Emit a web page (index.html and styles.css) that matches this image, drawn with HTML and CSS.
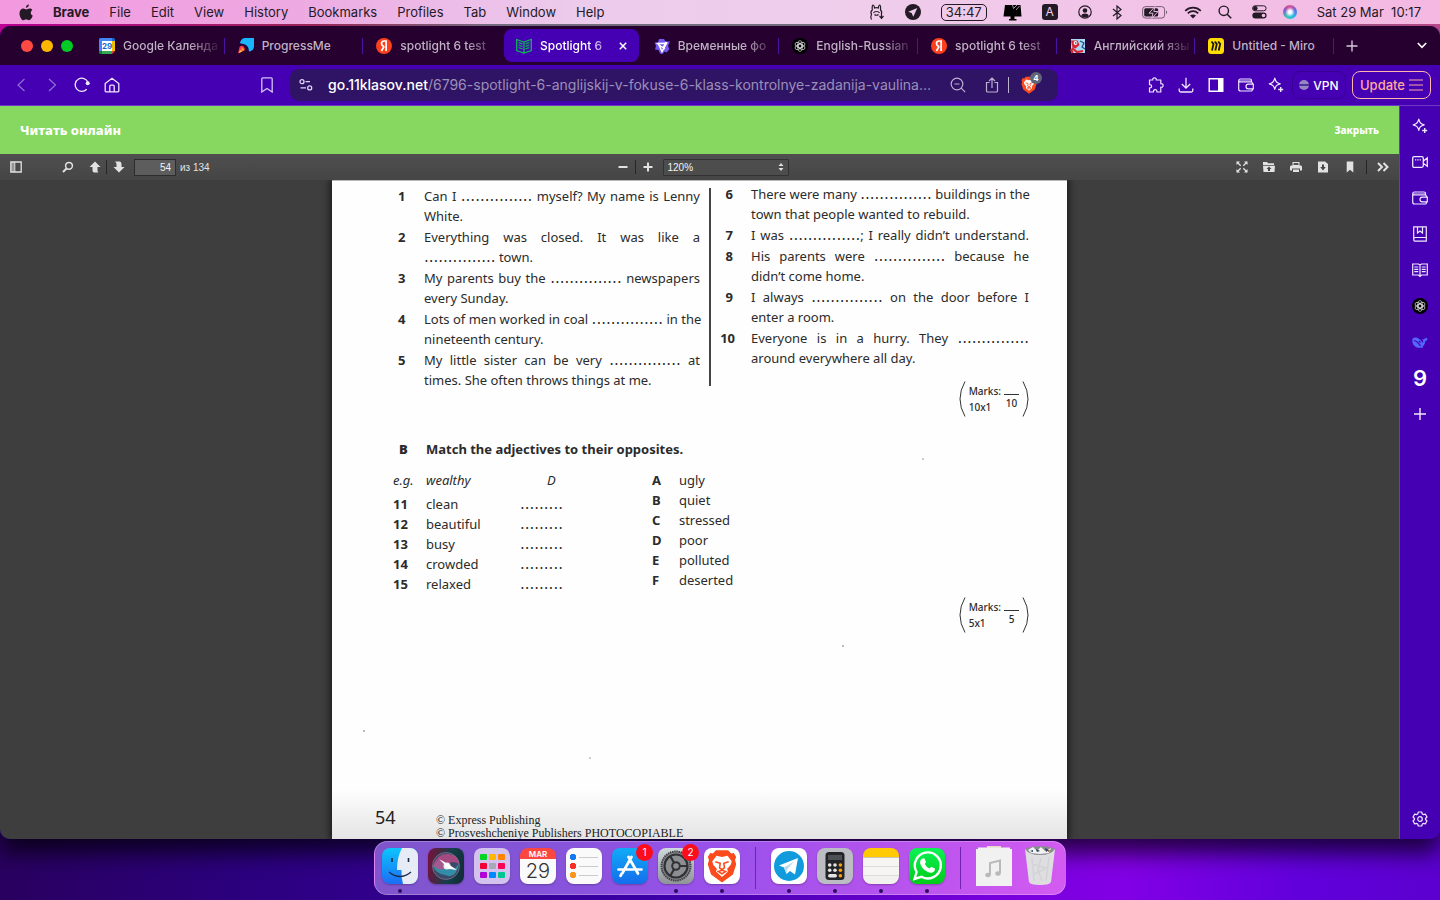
FILE: index.html
```html
<!DOCTYPE html>
<html lang="en">
<head>
<meta charset="utf-8">
<title>Spotlight 6</title>
<link rel="stylesheet" href="styles.css">
</head>
<body>
<svg class="defs" aria-hidden="true">
  <symbol id="sparkle" viewBox="0 0 16 16"><path d="M6.800 1.200c.9 3.600 1.800 4.600 5.400 5.600-3.600 1-4.500 2-5.400 5.600-1-3.600-2-4.600-5.600-5.600 3.600-1 4.600-2 5.600-5.600z" fill="none" stroke="currentColor" stroke-width="1.200" stroke-linejoin="round"/><path d="M12.700 10v5M10.200 12.500h5" stroke="currentColor" stroke-width="1.400"/></symbol>
  <symbol id="wallet" viewBox="0 0 16 16"><path d="M13.500 5V3.500a1.500 1.500 0 0 0-1.500-1.500H2.500a1.800 1.800 0 0 0-1.800 1.500V12A2 2 0 0 0 2.700 14H13a1.500 1.500 0 0 0 1.500-1.500M.7 3.800C1 4.800 2 5 2.700 5H13a1.500 1.500 0 0 1 1.500 1.500V7M15.300 7.200h-5a2.300 2.300 0 0 0 0 4.600h5z" fill="none" stroke="currentColor" stroke-width="1.200"/><path d="M1 3.200h12.300v1.600H2z" fill="currentColor" opacity=".6"/></symbol>
  <symbol id="yandex" viewBox="0 0 16 16"><circle cx="8" cy="8" r="8" fill="#fc3f1d"/><path d="M10.100 13V3H8.300C6.500 3 5.500 4 5.500 5.600c0 1.500.8 2.300 2.400 2.900M8.200 8.300 5.400 13" fill="none" stroke="#fff" stroke-width="1.700"/></symbol>
  <symbol id="knot" viewBox="0 0 16 16"><circle cx="8" cy="8" r="8" fill="#000"/><g fill="none" stroke="#d8d8d8" stroke-width=".7"><ellipse cx="8" cy="6.500" rx="2.300" ry="4"/><ellipse cx="8" cy="6.500" rx="2.300" ry="4" transform="rotate(60 8 8)"/><ellipse cx="8" cy="6.500" rx="2.300" ry="4" transform="rotate(120 8 8)"/><ellipse cx="8" cy="6.500" rx="2.300" ry="4" transform="rotate(180 8 8)"/><ellipse cx="8" cy="6.500" rx="2.300" ry="4" transform="rotate(240 8 8)"/><ellipse cx="8" cy="6.500" rx="2.300" ry="4" transform="rotate(300 8 8)"/></g></symbol>
  <symbol id="lion" viewBox="0 0 24 28"><path d="M7 1h10l2.500 2.700 2.200-.4 2 3.200-1 2.500 1 3.500-2.700 8.500L12 27.500 3 21 .3 12.500l1-3.500-1-2.500 2-3.200 2.200.4z" fill="#fb4b1d"/><path d="M7.500 5.500 12 6.500l4.500-1 3.500 4.500-.8 3-3 3.500.8 2L12 23l-5-4.500.8-2-3-3.500L4 10z" fill="#fff"/><path d="M6.500 10.500l4 1.200-.5 3.800 2 1.500 2-1.500-.5-3.800 4-1.200M9 18.500l3-1 3 1-3 2z" fill="none" stroke="#fb4b1d" stroke-width="1.300"/></symbol>
</svg>

<header class="menubar">
  <nav class="menus">
    <svg class="apple" viewBox="0 0 14 17"><path d="M9.900.5c.1 1.700-1.300 3.300-3 3.300C6.700 2.200 8.200.7 9.900.5zM13.300 5.900c-2.300 1.500-1.900 4.700.5 5.700-.7 2.300-2.300 4.700-3.800 4.700-1.100 0-1.500-.7-2.800-.7s-1.800.7-2.800.7C2.600 16.300.5 12.600.5 9.500c0-3 1.900-4.900 3.900-4.900 1.200 0 2.100.8 2.900.8s1.900-.9 3.300-.9c1.100 0 2.100.5 2.700 1.400z" fill="currentColor"/></svg>
    <b>Brave</b><span>File</span><span>Edit</span><span>View</span><span>History</span><span>Bookmarks</span><span>Profiles</span><span>Tab</span><span>Window</span><span>Help</span>
  </nav>
  <div class="status">
    <svg width="16" height="18" viewBox="0 0 16 18"><path d="M2.500 16.500c-1-2-.8-3.700 0-5-.9-1.800-.6-3.500.8-4.500C3 4.500 3.200 2 4 2s1.300 1.500 1.500 3c1.200-.6 2.600-.6 3.800 0C9.500 3.500 10 2 10.700 2s1.100 2.500.8 5c1.200 1 1.500 2.500.8 4M4.500 10c1-2 5-2 6 0M5.500 11.500c1 1 3 1 4 0M12.500 10v4.500m-2-1.500 2 2.300 2-2.300" fill="none" stroke="currentColor" stroke-width="1.200"/></svg>
    <svg class="s-tg" width="16" height="16" viewBox="0 0 16 16"><circle cx="8" cy="8" r="8" fill="currentColor"/><path d="M12.300 4 3.300 7.700l3.300 1.400 1.700 3.600z" fill="#efcbeb"/></svg>
    <span class="timer">34:47</span>
    <svg class="s-mon" width="19" height="17" viewBox="0 0 19 17"><path d="M2 1h15.500l1 11.500H.5zM7.500 12h4v3h2v1.500H6V15h1.500z" fill="#000"/><path d="M10.500 4.500 14 1M13 6l3.500-4M10.500 4.500 9.500 1" stroke="#efcbeb" stroke-width=".7"/></svg>
    <span class="kbd">A</span>
    <svg class="s-user" width="14" height="14" viewBox="0 0 14 14"><circle cx="7" cy="7" r="6.200" fill="none" stroke="currentColor" stroke-width="1.200"/><circle cx="7" cy="5.500" r="2.300" fill="currentColor"/><path d="M3.200 11c.8-3.200 6.800-3.200 7.600 0-2 2-5.600 2-7.600 0z" fill="currentColor"/></svg>
    <svg class="s-bt" width="10" height="15" viewBox="0 0 10 15"><path d="M1 4l8 6.500L5 14V1l4 3.500L1 11" fill="none" stroke="currentColor" stroke-width="1.200"/></svg>
    <svg class="s-bat" width="26" height="13" viewBox="0 0 26 13"><rect x=".6" y=".6" width="22" height="11.500" rx="3" fill="none" stroke="currentColor" opacity=".6"/><rect x="2.200" y="2.200" width="14" height="8.300" rx="1.500" fill="currentColor"/><path d="M24 4.500c1.500.5 1.500 3 0 3.500z" fill="currentColor" opacity=".6"/><path d="M13 .5 7 7.200h4L9.800 12.300 16 5.500h-4.200z" fill="currentColor" stroke="#f1c5e8" stroke-width=".9"/></svg>
    <svg class="s-wifi" width="18" height="13" viewBox="0 0 18 13"><path d="M1.200 4.800c4.500-4.300 11.100-4.300 15.600 0M3.800 7.300c3-2.800 7.400-2.800 10.400 0" fill="none" stroke="currentColor" stroke-width="1.800"/><path d="M6 9.600c1.700-1.600 4.300-1.600 6 0l-3 3z" fill="currentColor"/></svg>
    <svg class="s-find" width="14" height="14" viewBox="0 0 14 14"><circle cx="5.800" cy="5.800" r="4.700" fill="none" stroke="currentColor" stroke-width="1.400"/><path d="m9.200 9.200 4 4" stroke="currentColor" stroke-width="1.600"/></svg>
    <svg class="s-ctl" width="15" height="14" viewBox="0 0 15 14"><rect x=".6" y=".8" width="13.500" height="5" rx="2.500" fill="none" stroke="currentColor"/><circle cx="3.300" cy="3.300" r="2.200" fill="currentColor"/><rect x=".3" y="7.500" width="14.300" height="6" rx="3" fill="currentColor"/><circle cx="11.500" cy="10.500" r="1.800" fill="#f3bfe6"/></svg>
    <i class="siri-dot"></i>
    <time>Sat 29 Mar&nbsp; 10:17</time>
  </div>
</header>

<section class="window">
  <div class="tabstrip">
    <div class="lights"><button class="red" aria-label="Close"></button><button class="yellow" aria-label="Minimize"></button><button class="green" aria-label="Zoom"></button></div>
    <div class="tabs" role="tablist">
      <div class="tab fade" role="tab"><svg viewBox="0 0 16 16"><path d="M0 1.500Q0 0 1.500 0H13v3H3v10H0z" fill="#4285f4"/><path d="M13 0h1.500Q16 0 16 1.500V3h-3z" fill="#1967d2"/><path d="M13 3h3v10h-3z" fill="#fbbc04"/><path d="M3 13h10v3H3z" fill="#34a853"/><path d="M0 13h3v3H1.500Q0 16 0 14.500z" fill="#188038"/><path d="M13 13h3l-3 3z" fill="#ea4335"/><path d="M3 3h10v10H3z" fill="#fff"/><text x="8" y="11" text-anchor="middle" class="cal-mini">29</text></svg><span>Google Календа</span></div>
      <div class="tab" role="tab"><svg viewBox="0 0 16 16"><path d="M3 2.500Q4 0 6.500 0H16v8.500Q15.500 13 11 13.500 11 6 3 5.500 1 5 3 2.500z" fill="#19b5fe"/><path d="M0 15.500 1.500 9q2-2 4-.5t1 4Z" fill="#fb3a4a"/><path d="M1 15 2 12l2 1.500z" fill="#ffd43b"/><path d="m3.500 9 3 3-3 1z" fill="#ff9d2f"/></svg><span>ProgressMe</span></div>
      <div class="tab fade" role="tab"><svg><use href="#yandex"/></svg><span>spotlight 6 test</span></div>
      <div class="tab active" role="tab" aria-selected="true"><svg viewBox="0 0 16 16"><path d="M.7 1.500 8 4l7.300-2.500v11L8 15 .7 12.500zM8 4v11M2.500 4.500l4 1.400M2.500 7l4 1.400M2.500 9.500l4 1.400M13.500 4.500l-4 1.400M13.500 7l-4 1.400M13.500 9.500l-4 1.400" fill="none" stroke="#0fb158" stroke-width="1.300"/></svg><span>Spotlight 6</span><button class="close" aria-label="Close tab"><svg viewBox="0 0 8 8"><path d="m.8.8 6.400 6.400m0-6.400L.8 7.200" stroke="currentColor" stroke-width="1.500"/></svg></button></div>
      <div class="tab fade" role="tab"><svg viewBox="0 0 16 16"><path d="M5 1h5l1.500 2.500H16L14 8l1.500 3-3 3.500-2-1L8.500 16 6 15.500 4.500 12 1 11.500 2 8 .5 4.500H4z" fill="#7358f5"/><path d="m2.500 5.500 10-.2L8 13.500 5 7l6 4M12.500 4 9 10" fill="none" stroke="#fff" stroke-width="1.500"/></svg><span>Временные фо</span></div>
      <div class="tab fade" role="tab"><svg><use href="#knot"/></svg><span>English-Russian</span></div>
      <div class="tab fade" role="tab"><svg><use href="#yandex"/></svg><span>spotlight 6 test</span></div>
      <div class="tab fade" role="tab"><svg viewBox="0 0 16 16"><path d="M1 1h14v14H1z" fill="#a9d8f3"/><path d="M1 2.500h6.500l2 4.500-4 3.500-3-1z" fill="#d92332"/><circle cx="5.500" cy="5" r="1.900" fill="#fff"/><circle cx="5.800" cy="5" r=".8" fill="#222"/><path d="m1 11 1.500 4M2 10l5 4 6-1" fill="none" stroke="#d92332" stroke-width="2.200"/><path d="m10 3 4 2-2 4 3 2" fill="none" stroke="#23518f" stroke-width="1.300"/></svg><span>Английский язы</span></div>
      <div class="tab" role="tab"><svg viewBox="0 0 16 16"><rect width="16" height="16" rx="3.500" fill="#ffdd00"/><path d="M3.500 3.500 5.500 6 4 12.500M6.800 3.500 8.800 6l-1.500 6.500M10.200 3.500 12.200 6l-1.500 6.500" fill="none" stroke="#181818" stroke-width="1.800"/></svg><span>Untitled - Miro</span></div>
    </div>
    <button class="newtab" aria-label="New tab"><svg width="12" height="12" viewBox="0 0 12 12"><path d="M6 .5v11M.5 6h11" stroke="#d5c8da" stroke-width="1.400"/></svg></button>
    <button class="tabmenu" aria-label="Search tabs"><svg width="10" height="7" viewBox="0 0 10 7"><path d="m.8 1 4.200 4.300L9.200 1" fill="none" stroke="#fff" stroke-width="1.600"/></svg></button>
  </div>

  <div class="toolbar">
    <div class="navs">
      <button class="dim" aria-label="Back"><svg viewBox="0 0 16 16"><path d="M10.500 2 4 8l6.500 6" fill="none" stroke="currentColor" stroke-width="1.200"/></svg></button>
      <button class="dim" aria-label="Forward"><svg viewBox="0 0 16 16"><path d="M5 2l6.500 6L5 14" fill="none" stroke="currentColor" stroke-width="1.200"/></svg></button>
      <button aria-label="Reload"><svg viewBox="0 0 16 16"><path d="M12.700 12.200A6.600 6.600 0 1 1 14 5.500" fill="none" stroke="currentColor" stroke-width="1.300"/><circle cx="13.700" cy="6.300" r="2" fill="currentColor"/></svg></button>
      <button aria-label="Home"><svg viewBox="0 0 16 16"><path d="M1.200 6.500 8 1.200l6.800 5.300V14a.8.800 0 0 1-.8.800H2a.8.800 0 0 1-.8-.8zM5.800 14.500V9.200a1 1 0 0 1 1-1h2.400a1 1 0 0 1 1 1v5.300" fill="none" stroke="currentColor" stroke-width="1.300"/></svg></button>
      <button class="mark" aria-label="Bookmark"><svg viewBox="0 0 16 16"><path d="M2.800 1.800a1 1 0 0 1 1-1h8.400a1 1 0 0 1 1 1V15L8 11.500 2.800 15z" fill="none" stroke="currentColor" stroke-width="1.300"/></svg></button>
    </div>
    <div class="omnibox">
      <svg width="14" height="14" viewBox="0 0 14 14"><g fill="none" stroke="#ddd5f5" stroke-width="1.300"><circle cx="3" cy="3.700" r="2"/><path d="M6.500 3.700H11M1.500 9.800H7"/><circle cx="10.700" cy="9.900" r="2"/></g></svg>
      <p class="url"><b>go.11klasov.net</b>/6796-spotlight-6-anglijskij-v-fokuse-6-klass-kontrolnye-zadanija-vaulina...</p>
      <button aria-label="Zoom"><svg viewBox="0 0 16 16"><circle cx="7" cy="7" r="5.800" fill="none" stroke="currentColor" stroke-width="1.200"/><path d="m11.200 11.200 4 4M4.500 7h5" stroke="currentColor" stroke-width="1.200"/></svg></button>
      <button aria-label="Share"><svg viewBox="0 0 16 16"><path d="M5.500 5.500h-3v8.500q0 1 1 1h9q1 0 1-1V5.500h-3M8 11V1.500M5 4l3-3 3 3" fill="none" stroke="currentColor" stroke-width="1.200"/></svg></button>
      <i class="bar"></i>
      <button class="shield" aria-label="Shields"><svg><use href="#lion"/></svg><em>4</em></button>
    </div>
    <div class="tools">
      <button aria-label="Extensions"><svg viewBox="0 0 16 16"><path d="M1.500 3h3.300C4.500 1.500 5.300.8 6.500.8S8.500 1.500 8.200 3h4.600v3.800c1.500-.3 2.300.5 2.300 1.700s-.8 2-2.300 1.700V15H8.900c.2-1.600-.5-2.300-1.700-2.300s-2 .7-1.700 2.300h-4v-4.200c1.400.2 2.100-.5 2.100-1.600S2.900 7.400 1.500 7.600z" fill="none" stroke="currentColor" stroke-width="1.200" stroke-linejoin="round"/></svg></button>
      <button aria-label="Downloads"><svg viewBox="0 0 16 16"><path d="M8 .8v10M3.800 7 8 11l4.200-4M1.200 11.500V13.500a1.500 1.500 0 0 0 1.500 1.500h10.600a1.500 1.500 0 0 0 1.500-1.500v-2" fill="none" stroke="currentColor" stroke-width="1.300"/></svg></button>
      <button aria-label="Sidebar"><svg viewBox="0 0 16 16"><path d="M1.200 1.700h13.600v12.600H1.200z" fill="none" stroke="#fff" stroke-width="1.400"/><path d="M10 1.500h5v13h-5z" fill="#fff"/></svg></button>
      <button aria-label="Wallet"><svg><use href="#wallet"/></svg></button>
      <button aria-label="Leo"><svg><use href="#sparkle"/></svg></button>
    </div>
    <button class="vpn"><i></i>VPN</button>
    <button class="update">Update<svg width="14" height="12" viewBox="0 0 14 12"><path d="M0 1h14M0 6h14M0 11h14" stroke="currentColor" stroke-width="1.200"/></svg></button>
  </div>

  <div class="content">
    <main class="reader">
      <div class="greenbar"><h1>Читать онлайн</h1><a href="#">Закрыть</a></div>
      <div class="pdfbar">
        <div class="side">
          <button aria-label="Toggle sidebar"><svg viewBox="0 0 12 12"><path d="M.8 1h10.400v10H.8z" fill="none" stroke="currentColor" stroke-width="1.300"/><path d="M1 1h3.500v10H1z" fill="currentColor" opacity=".5"/><path d="M4.800 1v10" stroke="currentColor"/></svg></button>
          <button class="find" aria-label="Find"><svg viewBox="0 0 12 12"><circle cx="7" cy="4.800" r="3.400" fill="none" stroke="currentColor" stroke-width="1.500"/><path d="M4.500 7.500 1 11" stroke="currentColor" stroke-width="2"/></svg></button>
          <button class="up" aria-label="Previous page"><svg viewBox="0 0 12 12"><path d="m6 .5 5.500 5.500H8.500v3.500q0 1.500 1 2H5q-1.500-.5-1.500-2V6h-3z" fill="currentColor"/></svg></button>
          <i class="split"></i>
          <button class="down" aria-label="Next page"><svg viewBox="0 0 12 12"><path d="M6 11.500.5 6h3V3q0-1.500-1.500-2.500h5Q8.500 1 8.500 3v3h3z" fill="currentColor"/></svg></button>
          <label class="pageno"><input type="text" value="54" aria-label="Page"> из 134</label>
        </div>
        <div class="mid">
          <button aria-label="Zoom out"><svg viewBox="0 0 12 12"><path d="M1.500 6h9" stroke="currentColor" stroke-width="2"/></svg></button>
          <i class="split"></i>
          <button aria-label="Zoom in"><svg viewBox="0 0 12 12"><path d="M1.500 6h9M6 1.500v9" stroke="currentColor" stroke-width="2"/></svg></button>
          <div class="scale"><select aria-label="Scale"><option>120%</option></select><svg width="6" height="8" viewBox="0 0 6 8"><path d="M3 0l2.500 3h-5zM3 8 .5 5h5z" fill="#e0e0e0"/></svg></div>
        </div>
        <div class="end">
          <button aria-label="Full screen"><svg viewBox="0 0 12 12"><path d="M.5.500H4L.5 4zM11.500.500V4L8 .500zM.5 11.500V8L4 11.500zM11.500 11.500H8L11.500 8z" fill="currentColor"/><path d="m1 1 3.700 3.700M11 1 7.300 4.700M1 11l3.700-3.700M11 11 7.300 7.300" stroke="currentColor" stroke-width="1.300"/></svg></button>
          <button aria-label="Open"><svg viewBox="0 0 12 12"><path d="M0 1h4l1 1.300h6V4H0zM0 4.800h12L11.500 11H.5z" fill="currentColor"/><path d="M6 5.500 8.500 8H7v2H5V8H3.500z" fill="#444"/></svg></button>
          <button aria-label="Print"><svg viewBox="0 0 12 12"><path d="M2.500 1h7v3.500h-7zM0 6q0-1.500 1-1.500h10q1 0 1 1.500v3.500h-2V7.500H2v2H0zM3 8.500h6V11H3z" fill="currentColor"/><path d="M3.500 2h5v2h-5z" fill="#555"/></svg></button>
          <button aria-label="Download"><svg viewBox="0 0 12 12"><path d="M1 .5h7l3 2.500v8.500H1z" fill="currentColor"/><path d="M5 3.500h2V6h1.800L6 9.500 3.200 6H5z" fill="#444"/></svg></button>
          <button aria-label="Current view"><svg viewBox="0 0 12 12"><path d="M2.700.500h6.600v11L6 8.800l-3.300 2.700z" fill="currentColor"/></svg></button>
          <i class="split"></i>
          <button aria-label="Tools"><svg viewBox="0 0 12 12"><path d="m1 2 4 4-4 4M6.500 2l4 4-4 4" fill="none" stroke="currentColor" stroke-width="2"/></svg></button>
        </div>
      </div>

      <div class="viewer">
        <article class="sheet">
          <section class="gaps">
            <ol class="left">
              <li><b>1</b><p><span class="full">Can I <s>...............</s> myself? My name is Lenny</span><span>White.</span></p></li>
              <li><b>2</b><p><span class="full">Everything was closed. It was like a</span><span><s>...............</s> town.</span></p></li>
              <li><b>3</b><p><span class="full">My parents buy the <s>...............</s> newspapers</span><span>every Sunday.</span></p></li>
              <li><b>4</b><p><span class="full">Lots of men worked in coal <s>...............</s> in the</span><span>nineteenth century.</span></p></li>
              <li><b>5</b><p><span class="full">My little sister can be very <s>...............</s> at</span><span>times. She often throws things at me.</span></p></li>
            </ol>
            <ol class="right" start="6">
              <li><b>6</b><p><span class="full">There were many <s>...............</s> buildings in the</span><span>town that people wanted to rebuild.</span></p></li>
              <li><b>7</b><p><span class="full">I was <s>...............</s>; I really didn’t understand.</span></p></li>
              <li><b>8</b><p><span class="full">His parents were <s>...............</s> because he</span><span>didn’t come home.</span></p></li>
              <li><b>9</b><p><span class="full">I always <s>...............</s> on the door before I</span><span>enter a room.</span></p></li>
              <li><b>10</b><p><span class="full">Everyone is in a hurry. They <s>...............</s></span><span>around everywhere all day.</span></p></li>
            </ol>
          </section>
          <div class="marks"><svg viewBox="0 0 7 36"><path d="M6 .5Q-4 18 6 35.500" fill="none" stroke="#333"/></svg><p>Marks:<br>10x1</p><p class="total">10</p><svg viewBox="0 0 7 36"><path d="M1 .5Q11 18 1 35.500" fill="none" stroke="#333"/></svg></div>
          <h2><b>B</b>Match the adjectives to their opposites.</h2>
          <section class="match">
            <table class="words">
              <tr class="eg"><td>e.g.</td><td>wealthy</td><td>D</td></tr>
              <tr><th>11</th><td>clean</td><td><s>.........</s></td></tr>
              <tr><th>12</th><td>beautiful</td><td><s>.........</s></td></tr>
              <tr><th>13</th><td>busy</td><td><s>.........</s></td></tr>
              <tr><th>14</th><td>crowded</td><td><s>.........</s></td></tr>
              <tr><th>15</th><td>relaxed</td><td><s>.........</s></td></tr>
            </table>
            <table class="opposites">
              <tr><th>A</th><td>ugly</td></tr>
              <tr><th>B</th><td>quiet</td></tr>
              <tr><th>C</th><td>stressed</td></tr>
              <tr><th>D</th><td>poor</td></tr>
              <tr><th>E</th><td>polluted</td></tr>
              <tr><th>F</th><td>deserted</td></tr>
            </table>
          </section>
          <div class="marks second"><svg viewBox="0 0 7 36"><path d="M6 .5Q-4 18 6 35.500" fill="none" stroke="#333"/></svg><p>Marks:<br>5x1</p><p class="total">5</p><svg viewBox="0 0 7 36"><path d="M1 .5Q11 18 1 35.500" fill="none" stroke="#333"/></svg></div>
          <footer><span class="folio">54</span><p>© Express Publishing<br>© Prosveshcheniye Publishers PHOTOCOPIABLE</p></footer>
        </article>
      </div>
    </main>
    <aside class="sidebar">
      <button aria-label="Leo"><svg><use href="#sparkle"/></svg></button>
      <button aria-label="Talk"><svg viewBox="0 0 16 16"><path d="M.7 4.200q0-1.500 1.500-1.500h7.600q1.500 0 1.500 1.500v7.600q0 1.500-1.500 1.500H2.200q-1.500 0-1.500-1.500zM11.500 7l3.800-3.200v8.400L11.500 9.500" fill="none" stroke="currentColor" stroke-width="1.300"/><path d="M3 5.800h1.300m1 0h1.300m1 0h1.300" stroke="currentColor" stroke-width="1.300"/></svg></button>
      <button aria-label="Wallet"><svg><use href="#wallet"/></svg></button>
      <button aria-label="Bookmarks"><svg viewBox="0 0 16 16"><path d="M1.700.800h12.600v14.400H3.500q-1.800 0-1.800-1.800zM1.700 13.200q0-1.700 1.800-1.700h10.800M5.500 1v6L8 5l2.500 2V1" fill="none" stroke="currentColor" stroke-width="1.200"/></svg></button>
      <button aria-label="Reading list"><svg viewBox="0 0 16 16"><path d="M.7 2h5.800L8 3l1.500-1h5.800v11H9.500L8 14.500 6.500 13H.7zM8 3v11M2.300 5h4M2.300 7.300h4M2.300 9.700h4M9.700 5h4M9.700 7.300h4M9.700 9.700h4" fill="none" stroke="currentColor" stroke-width="1.200"/></svg></button>
      <button aria-label="ChatGPT"><svg><use href="#knot"/></svg></button>
      <button aria-label="DeepSeek"><svg viewBox="0 0 16 16"><path d="M.5 5c1.500-2 4-2 6-.5 2 1 3 3 4.500 4.500.5-1.500 0-3-1-4.300.8.700 1.500.8 2 .6.700-1 1.700-1.200 3.500-1.300-.2 2-1 3-2.300 3.300-.2 2.700-1.200 4.400-2.700 5.200l1 1c-3.500.7-7 .5-9-1.500S0 7.500.5 5z" fill="#5468ff"/><path d="M2 6.500c2.500.5 5 3 6.500 5.500M7 7l1.500 1.500" fill="none" stroke="#4400b2" stroke-width="1.200"/></svg></button>
      <button class="nine">9</button>
      <button aria-label="Add"><svg viewBox="0 0 16 16"><path d="M8 2v12M2 8h12" stroke="currentColor" stroke-width="1.400"/></svg></button>
      <button class="gear" aria-label="Settings"><svg viewBox="0 0 16 16"><path d="M6.300 1h3.400l.6 2 1 .6 2-.5L15 6l-1.500 1.500v1L15 10l-1.700 2.900-2-.5-1 .6-.6 2H6.300l-.6-2-1-.6-2 .5L1 10l1.500-1.500v-1L1 6l1.700-2.900 2 .5 1-.6z" fill="none" stroke="currentColor" stroke-width="1.200" stroke-linejoin="round"/><circle cx="8" cy="8" r="2.300" fill="none" stroke="currentColor" stroke-width="1.200"/></svg></button>
    </aside>
  </div>
</section>

<div class="dockrow">
  <nav class="dock">
    <span class="app run finder"><svg viewBox="0 0 36 36"><defs><linearGradient id="fb" x2="0" y2="1"><stop stop-color="#0dc5fb"/><stop offset="1" stop-color="#1c6df5"/></linearGradient></defs><rect width="36" height="36" rx="8" fill="url(#fb)"/><path d="M20 0h8a8 8 0 0 1 8 8v20a8 8 0 0 1-8 8h-7q-2-7-1.500-14H15Q15 9 20 0z" fill="#e6ebf5"/><path d="M7 24q11 9 22 0" fill="none" stroke="#1b2b48" stroke-width="1.300"/><path d="M10 10v4M26.500 10v4" stroke="#1b2b48" stroke-width="1.600"/></svg></span>
    <span class="app siri"><svg viewBox="0 0 36 36"><circle cx="18" cy="18" r="13.500" fill="#3a4a68" stroke="#a09bb0" stroke-width=".5"/><path d="M5 18q7-11 13-1T31 15q-3 17-14 12Q8 26 5 18z" fill="#2fa9c0" opacity=".7"/><path d="M5 18Q9 5 20 6t11 10q-8-5-12 2t-14 0z" fill="#c94a8a" opacity=".75"/><path d="m11 11 9 5 9 6-8-1z" fill="#fff"/><circle cx="19" cy="18" r="3.500" fill="#fff" opacity=".9"/></svg></span>
    <span class="app launch"><i></i><i></i><i></i><i></i><i></i><i></i><i></i><i></i><i></i></span>
    <span class="app calendar"><em>MAR</em><strong>29</strong></span>
    <span class="app reminders"><i></i><i></i><i></i></span>
    <span class="app store"><svg viewBox="0 0 36 36"><path d="m19.500 9-9 16M16.500 9 26 25.500M6.500 21.500h15M25 21.500h4.500M9.500 26l-1 1.800" fill="none" stroke="#fff" stroke-width="2.700" stroke-linecap="round"/></svg><sup>1</sup></span>
    <span class="app run prefs"><svg viewBox="0 0 36 36"><circle cx="18" cy="18" r="14.500" fill="#8c8e92" stroke="#3e4044" stroke-width="2" stroke-dasharray="1.500 .7"/><circle cx="18" cy="18" r="11.500" fill="none" stroke="#303236" stroke-width="2.200"/><circle cx="18" cy="18" r="3.800" fill="none" stroke="#303236" stroke-width="2"/><path d="M21.800 18H29M16 14.800 12.500 8.500M16 21.200 12.500 27.500" stroke="#303236" stroke-width="2.200"/></svg><sup>2</sup></span>
    <span class="app run brave"><svg viewBox="0 0 24 28"><use href="#lion" width="24" height="28"/></svg></span>
    <i class="rule"></i>
    <span class="app run telegram"><svg viewBox="0 0 36 36"><circle cx="18" cy="18" r="15" fill="#129bdc"/><path d="M27 10 8 17.500l5 2 2.500 6.500 3.500-3 5 3.500z" fill="#fff"/><path d="m13 19.500 10-6-7 8-.5 4.500" fill="#b9d9ec"/></svg></span>
    <span class="app run calc"><svg viewBox="0 0 36 36"><rect x="8.500" y="4" width="19" height="28" rx="3.500" fill="#232427"/><path d="M11 7h14v5H11z" fill="#4d5055"/><g fill="#e5e5e5"><circle cx="12.700" cy="17" r="1.800"/><circle cx="18" cy="17" r="1.800"/><circle cx="12.700" cy="22.300" r="1.800"/><circle cx="18" cy="22.300" r="1.800"/><rect x="11" y="26" width="9" height="3.600" rx="1.800"/></g><g fill="#ff9f0a"><circle cx="23.400" cy="17" r="1.800"/><circle cx="23.400" cy="22.300" r="1.800"/><circle cx="23.400" cy="27.700" r="1.800"/></g></svg></span>
    <span class="app run notes"></span>
    <span class="app run whatsapp"><svg viewBox="0 0 36 36"><path d="M5.500 31 7.600 24A13 13 0 1 1 12.500 28.800z" fill="none" stroke="#fff" stroke-width="2.400"/><path d="M13.500 10.500h2l1.500 3.700-1.300 1.800q1.500 3 4.800 4.500l1.800-1.800 3.700 1.800q.2 3.500-3.500 4.300c-5.500 0-11.500-6-11.500-11q.5-2.500 2.500-3.300z" fill="#fff"/></svg></span>
    <i class="rule"></i>
    <span class="app music"><svg viewBox="0 0 36 40"><path d="M11 0h14v4H11z" fill="#e5d9ca"/><path d="M0 3h2V1.500h32V3h2v37H0z" fill="#f1f1f2"/><path d="M14 29V17l10-2.500V27" fill="none" stroke="#b9b9bb" stroke-width="2"/><ellipse cx="12" cy="29" rx="2.700" ry="2.200" fill="#b9b9bb"/><ellipse cx="22" cy="27.500" rx="2.700" ry="2.200" fill="#b9b9bb"/></svg></span>
    <span class="app trash"><svg viewBox="0 0 32 40"><path d="M1 3h30l-4 33q-1 3-11 3T5 36z" fill="#dedee1"/><path d="M1 3q5-3 15-3t15 3q-4 6-15 6T1 3z" fill="#8b8d92"/><path d="m4 4 5-3 4 4 4-4 4 4 6-3-2 5-9 1-9-1z" fill="#f2f2f2"/><path d="m12 3 4 2-3 1zM21 2l4 2-3 2zM6 5l3-1v2z" fill="#263f61"/><path d="m24 4 3 1-3 1z" fill="#a5582e"/><path d="m8 12 2 23M17 12l-3 12 4 11M25 11l-3 24M8 18l14 4-12 6" fill="none" stroke="#d3d3d7" stroke-width="1.500"/></svg></span>
  </nav>
</div>
</body>
</html>
```

FILE: styles.css
```css
* { box-sizing: border-box; }
body {
  margin: 0;
  height: 100vh;
  overflow: hidden;
  display: flex;
  flex-direction: column;
  font-family: Inter, "Noto Sans", sans-serif;
  font-size: 13px;
  background: linear-gradient(90deg, #c4009c 0, #a3285c 22%, #7a7288 34%, #77717f 80%, #c04a90 100%) top / 100% 60px no-repeat,
    linear-gradient(90deg, #29005f 0, #2c0080 18%, #3b00a5 45%, #7600db 68%, #8200e5 78%, #6200dc 90%, #5b00cf 100%);
}
button { border: 0; padding: 0; background: none; color: inherit; font: inherit; display: flex; align-items: center; justify-content: center; }
p, h1, h2, ol { margin: 0; padding: 0; }
svg { display: block; flex: none; }
.defs { position: absolute; width: 0; height: 0; }

/* System menu bar */
.menubar {
  flex: none;
  position: relative;
  z-index: 1;
  height: 24px;
  margin-bottom: 2px;
  padding: 0 19px 0 19px;
  display: flex;
  align-items: center;
  justify-content: space-between;
  color: #241a26;
  background: linear-gradient(90deg, #f399df 0, #eda9e2 20%, #eccbec 40%, #efcdeb 60%, #f4b8e2 100%);
}
.menus { display: flex; align-items: center; gap: 20px; }
.menus b { font-weight: 700; }
.apple { width: 14px; height: 17px; }
.status { display: flex; align-items: center; gap: 16px; }
.timer { border: 1px solid #241a26; border-radius: 5px; height: 17px; line-height: 15px; padding: 0 4px; margin-left: 4px; }
.kbd { width: 16px; height: 16px; border-radius: 3px; background: #241a26; color: #f3cdea; text-align: center; line-height: 16px; font-size: 12px; }
.kbd, .s-user, .s-bt, .s-ctl, .s-tg, .s-bat, .status time { margin-left: 4px; }
.siri-dot { width: 14px; height: 14px; border-radius: 50%; background: radial-gradient(circle, #fff 0 15%, transparent 50%), conic-gradient(#e2508c, #5c6ee8, #27b9e9, #38c9b4, #8258c8, #e2508c); }

/* Browser window */
.window { flex: 1; min-height: 0; display: flex; flex-direction: column; border-radius: 10px; overflow: hidden; background: #4400b2; box-shadow: 0 14px 22px 0 rgba(0, 0, 0, .7); }
.tabstrip { flex: none; height: 39px; background: #26002e; display: flex; align-items: center; }
.lights { flex: none; width: 86px; padding-left: 21px; display: flex; gap: 8px; }
.lights button { width: 12px; height: 12px; border-radius: 50%; }
.red { background: #ff4a43; }
.yellow { background: #ffb700; }
.green { background: #00ca24; }
.tabs { flex: 1; min-width: 0; display: grid; grid-auto-flow: column; grid-auto-columns: minmax(0, 1fr); }
.tab { min-width: 0; height: 33px; padding: 0 4px 0 13px; display: flex; align-items: center; gap: 8px; color: #bfb2c4; position: relative; font-size: 12px; }
.tab > svg { width: 16px; height: 16px; }
.tab > span { flex: 1; white-space: nowrap; font-weight: 500; }
.tab.fade > span { mask-image: linear-gradient(90deg, #000 66px, rgba(0, 0, 0, .15) 94px); }
.tab:not(.active)::after { content: ""; position: absolute; right: 0; top: 9px; width: 1px; height: 16px; background: #4a12a0; }
.tab:nth-child(3)::after { display: none; }
.tab.active { background: #4400b2; border-radius: 8px; color: #fff; margin: 0 2px; padding: 0 12px 0 12px; }
.tab.active > span { mask-image: linear-gradient(90deg, #000 48px, rgba(0, 0, 0, .4) 68px); }
.close { width: 8px; height: 8px; }
.close svg { width: 8px; height: 8px; }
.cal-mini { font: 700 8px Inter, sans-serif; fill: #1967d2; }
.newtab { flex: none; width: 36px; }
.tabmenu { flex: none; margin-left: 45px; width: 25px; padding-right: 12px; }

.toolbar { flex: none; height: 41px; border-bottom: 1px solid #6a38c4; display: flex; align-items: center; color: #eee8ff; padding-right: 9px; }
.toolbar button svg { width: 16px; height: 16px; }
.navs { flex: none; width: 290px; padding: 0 15px 0 14px; display: flex; gap: 14px; }
.navs .dim { color: #9270d5; }
.navs .mark { margin-left: auto; color: #d4c4f2; }
.omnibox { flex: 1 1 768px; min-width: 0; height: 32px; border-radius: 9px; background: #2f1466; display: flex; align-items: center; padding: 0 21px 0 9px; color: #bbb0d0; }
.omnibox > svg { margin-right: 15px; }
.url { flex: 1; min-width: 0; white-space: nowrap; font-size: 14px; line-height: 20px; color: #9b8fb5; }
.url b { font-weight: 500; color: #fff; }
.omnibox button { margin-left: 18px; }
.omnibox .bar { width: 1px; height: 16px; background: #bfb5cf; margin-left: 8px; }
.omnibox .shield { margin-left: 12px; position: relative; }
.omnibox .shield svg { width: 16px; height: 18px; }
.shield em { position: absolute; left: 9px; top: -4px; width: 12px; height: 12px; border-radius: 50%; background: #626577; color: #fff; font: 700 8px/12px Inter, sans-serif; }
.tools { flex: none; padding: 0 8px 0 90px; display: flex; gap: 14px; }
.vpn { flex: none; width: 54px; height: 28px; border: 1px solid #360093; border-radius: 8px; gap: 4px; color: #fff; font-weight: 500; font-size: 12px; }
.vpn i { width: 10px; height: 10px; border-radius: 50%; background: linear-gradient(#9585c0 4px, #4e32a0 4px 6px, #9585c0 6px); }
.toolbar .update { flex: none; width: 79px; height: 28px; margin-left: 6px; border: 1px solid #ffb6ae; border-radius: 8px; color: #ffa99d; gap: 4px; font-weight: 500; }
.toolbar .update svg { width: 14px; height: 12px; }

/* Side panel */
.content { flex: 1; min-height: 0; display: flex; }
.sidebar { flex: none; width: 41px; border-left: 1px solid #6a38c4; padding: 12px 0; display: flex; flex-direction: column; align-items: center; gap: 20px; color: #eee8ff; }
.sidebar button, .sidebar svg { width: 16px; height: 16px; }
.sidebar .nine { font-size: 22px; font-weight: 600; line-height: 16px; color: #fff; }
.sidebar .gear { margin-top: auto; }

/* Reader */
.reader { flex: 1; min-width: 0; display: flex; flex-direction: column; }
.greenbar { flex: none; height: 48px; background: #87d860; padding: 0 20px; display: flex; align-items: center; justify-content: space-between; font-family: "Noto Sans", sans-serif; color: #fff; }
.greenbar h1 { font-size: 13px; font-weight: 800; }
.greenbar a { color: #fff; text-decoration: none; font-size: 10px; font-weight: 800; }
.pdfbar { flex: none; height: 26px; background: linear-gradient(#4f4f4f, #454545); display: grid; grid-template-columns: 1fr auto 1fr; align-items: center; color: #e2e2e2; font: 10px "Liberation Sans", sans-serif; position: relative; }
.pdfbar > div { display: flex; align-items: center; }
.pdfbar button, .pdfbar button svg { width: 12px; height: 12px; }
.side { padding-left: 10px; }
.side .find { margin-left: 40px; }
.side .up { margin-left: 15px; }
.split { width: 1px; height: 14px; background: #262626; }
.side .split { margin: 0 6px 0 5px; }
.pageno { margin-left: 9px; display: flex; align-items: center; gap: 4px; }
.pageno input { width: 42px; height: 17px; background: #5d5d5d; border: 1px solid #2d2d2d; color: #f0f0f0; font: inherit; text-align: right; padding: 0 4px; }
.mid { gap: 6px; padding-left: 6px; }
.scale { position: relative; margin-left: 3px; display: flex; }
.scale select { appearance: none; width: 126px; height: 17px; border: 1px solid #323232; background: #4d4d4d; color: #f4f4f4; font: inherit; padding: 0 4px; border-radius: 1px; }
.scale svg { position: absolute; right: 5px; top: 4px; }
.end { justify-content: flex-end; gap: 15px; padding-right: 10px; }
.end .split { margin: 0 -5px 0 -5px; }

.viewer { flex: 1; min-height: 0; overflow: hidden; background: #3e3e3e; padding: 0 20px; display: flex; justify-content: center; }
.sheet {
  flex: 0 1 735px;
  min-width: 0;
  display: flex;
  flex-direction: column;
  padding: 3px 38px 0 61px;
  border-top: 1px solid #b9b9b9;
  color: #2b2b2b;
  font: 13px/20px "Noto Sans", sans-serif;
  background:
    radial-gradient(circle at 32px 550px, #bbb 0 1px, transparent 1px),
    radial-gradient(circle at 511px 465px, #bbb 0 1px, transparent 1px),
    radial-gradient(circle at 258px 577px, #ccc 0 1px, transparent 1px),
    radial-gradient(circle at 591px 278px, #ccc 0 1px, transparent 1px),
    linear-gradient(#fefefe calc(100% - 50px), #e4e4e4);
  box-shadow: 0 0 7px 2px rgba(0, 0, 0, .6);
}
.sheet s { text-decoration: none; font: 15px/10px "DejaVu Sans", sans-serif; }
.gaps { display: grid; grid-template-columns: 318px minmax(0, 1fr); }
.gaps ol { list-style: none; display: flex; flex-direction: column; gap: 1px; }
.gaps .left { padding: 2px 9px 0 5px; border-right: 2px solid #444; border-image: linear-gradient(transparent 5px, #444 5px calc(100% - 5px), transparent calc(100% - 5px)) 1; }
.gaps .right { padding-left: 8px; }
.gaps li { display: grid; grid-template-columns: 26px 1fr; }
.gaps .right li { grid-template-columns: 32px 1fr; }
.gaps .right b { width: 16px; text-align: right; }
.gaps .right li:not(:last-child) b { width: 14px; }
.gaps span { display: block; white-space: nowrap; }
.gaps .full { text-align-last: justify; }
.marks { align-self: flex-end; height: 36px; margin-top: -9px; display: flex; font-size: 10px; line-height: 16px; gap: 3px; font-weight: 500; }
.marks svg { width: 7px; height: 36px; }
.marks p { padding-top: 2px; }
.marks .total { margin-top: 13px; padding: 0; height: 16px; width: 15px; border-top: 1px solid #333; text-align: center; }
.sheet h2 { margin-top: 22px; padding-left: 6px; font-size: 13px; line-height: 20px; display: flex; }
.sheet h2 b { width: 27px; }
.match { margin-top: 11px; display: flex; align-items: flex-start; gap: 89px; }
.match table { border-collapse: collapse; }
.match th, .match td { padding: 0; height: 20px; text-align: left; }
.words th, .words td:first-child { width: 33px; }
.words td:nth-child(2) { width: 94px; }
.words .eg { font-style: italic; }
.words .eg td { height: 24px; vertical-align: top; }
.words .eg td:nth-child(3) { padding-left: 27px; }
.opposites th { width: 27px; }
.marks.second { margin-top: 3px; }
.sheet footer { margin-top: auto; padding: 0 0 0 43px; height: 31px; position: relative; font: 12px/13px "Liberation Serif", serif; color: #222; }
.folio { position: absolute; left: -18px; top: -1px; font: 18px/20px "Noto Sans", sans-serif; }
.sheet footer p { padding-top: 6px; }

/* Dock */
.dockrow { flex: none; height: 61px; padding-top: 2px; display: flex; justify-content: center; align-items: flex-start; position: relative; }
.dock { height: 54px; padding: 6px 9px 0 7px; border: 1px solid rgba(255, 255, 255, .25); border-radius: 13px; background: linear-gradient(100deg, #7f55cc 0, #8554d9 25%, #9a51eb 50%, #b653ed 75%, #d45bf1 100%); display: flex; gap: 10px; align-items: flex-start; }
.app { flex: none; width: 36px; height: 36px; border-radius: 8px; position: relative; display: flex; align-items: center; justify-content: center; box-shadow: 0 1px 2px rgba(0, 0, 0, .25); }
.app > svg { width: 36px; height: 36px; }
.run::after { content: ""; position: absolute; bottom: -9px; left: 16px; width: 4px; height: 4px; border-radius: 50%; background: #2b0c5c; }
.app sup { position: absolute; top: -4px; right: -5px; width: 17px; height: 17px; border-radius: 50%; background: #fb0d1b; color: #fff; font-size: 10px; line-height: 17px; text-align: center; }
.siri { background: linear-gradient(100deg, #7b103c, #123f48 60%, #132b36); }
.launch { background: #d3c1ee; display: grid; grid-template-columns: repeat(3, 7px); grid-auto-rows: 6px; gap: 3px 2px; align-content: center; align-items: stretch; }
.launch i { border-radius: 1px; background: #00d51f; }
.launch i:nth-child(2) { background: #ffb700; }
.launch i:nth-child(3) { background: #ff8400; }
.launch i:nth-child(4) { background: #f20035; }
.launch i:nth-child(5) { background: #a9a9b6; }
.launch i:nth-child(6) { background: #fa0354; }
.launch i:nth-child(7) { background: #b000d6; }
.launch i:nth-child(8) { background: #0089ff; }
.launch i:nth-child(9) { background: #00c890; }
.calendar { background: linear-gradient(#fb4740 11px, #fafafa 11px); flex-direction: column; justify-content: flex-start; color: #333; }
.calendar em { font: 600 8px/12px Inter, sans-serif; color: #fff; }
.calendar strong { font-size: 20px; line-height: 22px; font-weight: 300; }
.reminders { background: #fafafa; flex-direction: column; gap: 3px; }
.reminders i { width: 28px; height: 6px; background: radial-gradient(circle at 3px 3px, #1479f5 3px, transparent 3px) 0 0 / 6px 6px no-repeat, linear-gradient(transparent 3px, #ccc 3px 4px, transparent 4px) 9px 0 / 19px 6px no-repeat; }
.reminders i:nth-child(2) { background: radial-gradient(circle at 3px 3px, #fb2d29 3px, transparent 3px) 0 0 / 6px 6px no-repeat, linear-gradient(transparent 3px, #ccc 3px 4px, transparent 4px) 9px 0 / 19px 6px no-repeat; }
.reminders i:nth-child(3) { background: radial-gradient(circle at 3px 3px, #fb9620 3px, transparent 3px) 0 0 / 6px 6px no-repeat, linear-gradient(transparent 3px, #ccc 3px 4px, transparent 4px) 9px 0 / 19px 6px no-repeat; }
.store { background: linear-gradient(#10acf7, #146deb); }
.prefs { background: linear-gradient(#cfdadd, #909397); }
.brave, .telegram { background: #fff; }
.brave > svg { width: 30px; height: 34px; }
.calc { background: #bcbcc3; }
.notes { background: linear-gradient(#ffcb00 9px, #cfc6b5 9px 10px, #f7f5f1 10px 18px, #ddd 18px 19px, #f7f5f1 19px 27px, #ddd 27px 28px, #f3f1ed 28px); }
.whatsapp { background: linear-gradient(#0cf356, #00cb18); }
.rule { width: 1px; height: 42px; background: #7122b3; margin: -1px 5px 0; }
.music, .trash { box-shadow: none; height: 40px; margin-top: -2px; border-radius: 0; }
.music > svg { height: 40px; }
.trash { width: 32px; margin-left: 2px; }
.trash > svg { width: 32px; height: 40px; }
```
